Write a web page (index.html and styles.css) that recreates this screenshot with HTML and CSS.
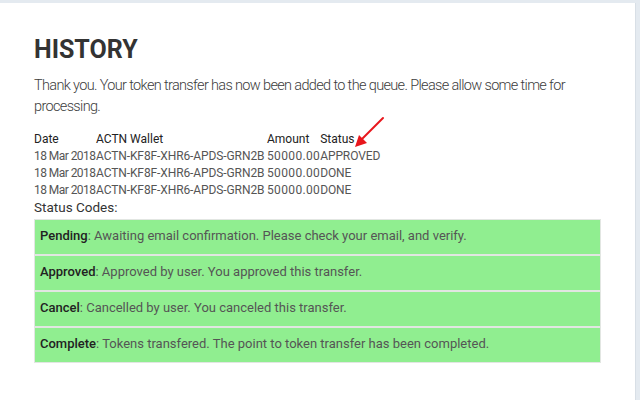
FILE: index.html
```html
<!DOCTYPE html>
<html lang="en">
<head>
    <meta charset="UTF-8">
    <meta name="viewport" content="width=device-width, initial-scale=1.0">
    <title>History</title>
    <link rel="stylesheet" href="styles.css">
</head>
<body>
    <div class="page">
        <div class="content">
            <h1>HISTORY</h1>
            <p class="intro">Thank you. Your token transfer has now been added to the queue. Please allow some time for processing.</p>

            <table class="history">
                <thead>
                    <tr>
                        <th>Date</th>
                        <th>ACTN Wallet</th>
                        <th>Amount</th>
                        <th>Status</th>
                    </tr>
                </thead>
                <tbody>
                    <tr>
                        <td>18 Mar 2018</td>
                        <td>ACTN-KF8F-XHR6-APDS-GRN2B</td>
                        <td>50000.00</td>
                        <td>APPROVED</td>
                    </tr>
                    <tr>
                        <td>18 Mar 2018</td>
                        <td>ACTN-KF8F-XHR6-APDS-GRN2B</td>
                        <td>50000.00</td>
                        <td>DONE</td>
                    </tr>
                    <tr>
                        <td>18 Mar 2018</td>
                        <td>ACTN-KF8F-XHR6-APDS-GRN2B</td>
                        <td>50000.00</td>
                        <td>DONE</td>
                    </tr>
                </tbody>
            </table>

            <div class="codes-title">Status Codes:</div>
            <div class="codes">
                <div class="code-row"><b>Pending</b>: Awaiting email confirmation. Please check your email, and verify.</div>
                <div class="code-row"><b>Approved</b>: Approved by user. You approved this transfer.</div>
                <div class="code-row"><b>Cancel</b>: Cancelled by user. You canceled this transfer.</div>
                <div class="code-row"><b>Complete</b>: Tokens transfered. The point to token transfer has been completed.</div>
            </div>
        </div>

        <!-- annotation arrow -->
        <svg class="arrow" width="40" height="40" viewBox="0 0 40 40">
            <line x1="36" y1="4" x2="15" y2="25" stroke="#e8161c" stroke-width="2" stroke-linecap="round"/>
            <polygon points="8,33 12,21 20,29" fill="#e8161c"/>
        </svg>
    </div>
</body>
</html>
```

FILE: styles.css
```css
body {
    margin: 0;
    padding: 0;
    background-color: #e4eaf0;
    font-family: Roboto, "Liberation Sans", sans-serif;
    color: #444;
}
.page {
    position: relative;
    background-color: white;
    margin-top: 3px;
    margin-right: 4px;
    border-right: 1px solid #d8dfe6;
    height: 397px;
}
.content {
    padding: 32px 34px 0 34px;
}
h1 {
    margin: 0 0 11px 0;
    font-size: 25px;
    line-height: 29px;
    font-weight: bold;
    color: #333;
}
.intro {
    margin: 0 0 14px 0;
    font-size: 14.5px;
    font-weight: 300;
    letter-spacing: -0.65px;
    line-height: 21px;
    color: #3c3c3c;
}
.history {
    border-collapse: collapse;
    font-size: 12px;
    line-height: 17px;
}
.history th,
.history td {
    padding: 0;
    text-align: left;
    white-space: nowrap;
}
.history th {
    font-weight: normal;
    color: #222;
}
.history th:nth-child(1) { width: 62px; }
.history th:nth-child(2) { width: 171px; }
.history th:nth-child(3) { width: 52px; }
.history td {
    color: #555;
    letter-spacing: -0.1px;
}
.history td:first-child {
    letter-spacing: -0.55px;
}
.history td:nth-child(3) {
    letter-spacing: 0.35px;
}
.codes-title {
    font-size: 13.5px;
    line-height: 17px;
    color: #333;
}
.codes {
    margin-top: 3px;
}
.code-row {
    background-color: #90ee90;
    border: 1px solid #e2e6e2;
    padding: 7px 5px 9px 5px;
    font-size: 13px;
    line-height: 18px;
    color: #555;
}
.code-row b {
    font-weight: 500;
    color: #222;
}
.arrow {
    position: absolute;
    left: 347px;
    top: 111px;
}
```
